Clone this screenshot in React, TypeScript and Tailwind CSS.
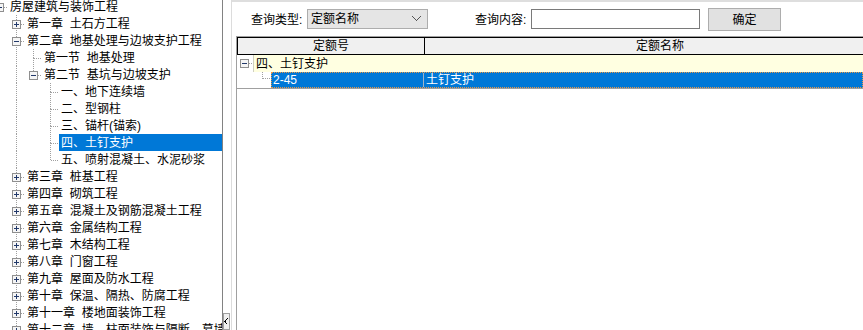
import React from "react";

type TreeNode = {
  label: string;
  children?: TreeNode[];
  closed?: boolean;
  selected?: boolean;
};

type Row = { node: TreeNode; depth: number; last: boolean; lines: boolean[] };

const chapter = (label: string): TreeNode => ({ label, closed: true });

const tree: TreeNode = {
  label: "房屋建筑与装饰工程",
  children: [
    chapter("第一章  土石方工程"),
    {
      label: "第二章  地基处理与边坡支护工程",
      children: [
        { label: "第一节  地基处理" },
        {
          label: "第二节  基坑与边坡支护",
          children: [
            { label: "一、地下连续墙" },
            { label: "二、型钢柱" },
            { label: "三、锚杆(锚索)" },
            { label: "四、土钉支护", selected: true },
            { label: "五、喷射混凝土、水泥砂浆" },
          ],
        },
      ],
    },
    chapter("第三章  桩基工程"),
    chapter("第四章  砌筑工程"),
    chapter("第五章  混凝土及钢筋混凝土工程"),
    chapter("第六章  金属结构工程"),
    chapter("第七章  木结构工程"),
    chapter("第八章  门窗工程"),
    chapter("第九章  屋面及防水工程"),
    chapter("第十章  保温、隔热、防腐工程"),
    chapter("第十一章  楼地面装饰工程"),
    chapter("第十二章  墙、柱面装饰与隔断、幕墙工程"),
    chapter("第十三章  天棚工程"),
  ],
};

const flatten = (node: TreeNode, depth: number, last: boolean, lines: boolean[], out: Row[]) => {
  out.push({ node, depth, last, lines });
  const kids = node.children ?? [];
  kids.forEach((c, i) => flatten(c, depth + 1, i === kids.length - 1, [...lines, !last], out));
  return out;
};

const rows = flatten(tree, 0, true, [], []);

const LINE = "#a0a0a0";

const Expander = ({ open }: { open: boolean }) => (
  <>
    <rect x="4.5" y="5.5" width="8" height="8" fill="#f5f5f5" stroke="#8f8f8f" />
    <line x1="6" x2="11" y1="9.5" y2="9.5" stroke="#22396a" />
    {!open ? <line x1="8.5" x2="8.5" y1="7" y2="12" stroke="#22396a" /> : null}
  </>
);

const Guide = ({ pass, node, top, bottom, box }: { pass?: boolean; node?: boolean; top?: boolean; bottom?: boolean; box?: "open" | "closed" }) => (
  <svg width="17" height="17" className="block shrink-0" shapeRendering="crispEdges">
    {pass ? <line x1="8.5" x2="8.5" y1="0" y2="17" stroke={LINE} strokeDasharray="1 1" /> : null}
    {node && top ? <line x1="8.5" x2="8.5" y1="0" y2="9" stroke={LINE} strokeDasharray="1 1" /> : null}
    {node && bottom ? <line x1="8.5" x2="8.5" y1="9" y2="17" stroke={LINE} strokeDasharray="1 1" /> : null}
    {node ? <line x1="9" x2="17" y1="9.5" y2="9.5" stroke={LINE} strokeDasharray="1 1" /> : null}
    {box ? <Expander open={box === "open"} /> : null}
  </svg>
);

const TreeRow = ({ row }: { row: Row }) => {
  const { node, depth, last, lines } = row;
  const hasKids = node.closed || (node.children && node.children.length > 0);
  return (
    <div className="flex h-[17px] items-stretch whitespace-pre">
      {lines.map((l, k) => (
        <Guide key={k} pass={l} />
      ))}
      <Guide node top={depth > 0} bottom={!last} box={hasKids ? (node.closed ? "closed" : "open") : undefined} />
      <span className={node.selected ? "flex-1 bg-[#0078d7] pl-[2px] pt-[1px] leading-[16px] text-white" : "pl-[2px] pr-[4px] pt-[1px] leading-[16px] text-black"}>{node.label}</span>
    </div>
  );
};

const ToolLabel = ({ text }: { text: string }) => <span className="w-[56px] shrink-0 pt-[10px] leading-[17px]">{text}</span>;

export default function App() {
  return (
    <div className="flex h-[330px] w-[863px] overflow-hidden bg-white font-['Liberation_Sans','Noto_Sans_CJK_SC',sans-serif] text-[12px] text-black">
      <div className="h-full w-[222px] shrink-0 overflow-hidden">
        <div className="ml-[-9px] mt-[-2px]">
          {rows.map((r, i) => (
            <TreeRow key={i} row={r} />
          ))}
        </div>
      </div>

      <div className="flex h-full w-[10px] shrink-0 flex-col justify-end border-l border-r border-l-[#828282] border-r-[#dcdcdc]">
        <div className="flex h-[17px] w-[7px] items-center justify-center border border-[#a0a0a0] bg-[#f0f0f0]">
          <svg width="5" height="7" shapeRendering="crispEdges">
            <polyline points="3.5,0.5 1,3.5 3.5,6.5" fill="none" stroke="#000" />
          </svg>
        </div>
      </div>

      <div className="flex min-w-0 flex-1 flex-col overflow-hidden border-t-2 border-[#dedede]">
        <div className="flex h-[34px] shrink-0 items-start pl-[19px]">
          <ToolLabel text="查询类型:" />
          <div className="mt-[7px] flex h-[20px] w-[121px] shrink-0 items-center justify-between border border-[#adadad] bg-[#e5e5e5] pl-[3px] pr-[6px]">
            <span className="pt-[1px] leading-[17px]">定额名称</span>
            <svg width="9" height="6" shapeRendering="crispEdges">
              <polyline points="0.5,0.5 4.5,4.5 8.5,0.5" fill="none" stroke="#555" />
            </svg>
          </div>
          <div className="ml-[47px] flex">
            <ToolLabel text="查询内容:" />
          </div>
          <div className="mt-[7px] h-[20px] w-[169px] shrink-0 border border-[#7a7a7a] bg-white" />
          <button className="ml-[8px] mt-[6px] h-[23px] w-[73px] shrink-0 border border-[#adadad] bg-[#e1e1e1] pt-[1px] leading-[17px]">确定</button>
        </div>

        <div className="ml-[4px] flex flex-1 flex-col border-l border-t border-[#a0a0a0]">
          <div className="flex h-[18px] shrink-0 border-b border-l border-t border-black bg-[#f0f0f0]">
            <div className="w-[187px] shrink-0 border-r border-black pt-[1px] text-center leading-[15px]">定额号</div>
            <div className="w-[470px] shrink-0 pt-[1px] text-center leading-[15px]">定额名称</div>
          </div>

          <div className="flex shrink-0 flex-col border-b border-[#a0a0a0]">
            <div className="flex h-[17px]">
              <svg width="16" height="17" className="block shrink-0" shapeRendering="crispEdges">
                <rect x="3.5" y="4.5" width="8" height="8" fill="#f5f5f5" stroke="#8f8f8f" />
                <line x1="5" x2="10" y1="8.5" y2="8.5" stroke="#22396a" />
                <line x1="12" x2="16" y1="8.5" y2="8.5" stroke={LINE} strokeDasharray="1 1" />
              </svg>
              <div className="flex-1 whitespace-nowrap border-l border-[#d0d0c0] bg-[#ffffe1] pl-[2px] pt-[1px] leading-[16px]">四、土钉支护</div>
            </div>
            <div className="flex h-[16px]">
              <svg width="34" height="16" className="block shrink-0" shapeRendering="crispEdges">
                <line x1="25.5" x2="25.5" y1="0" y2="7" stroke={LINE} strokeDasharray="1 1" />
                <line x1="26" x2="34" y1="6.5" y2="6.5" stroke={LINE} strokeDasharray="1 1" />
              </svg>
              <div className="flex flex-1 border border-dotted border-[#e89848] bg-[#0078d7] text-white">
                <div className="w-[152px] shrink-0 border-r border-[#9fb4c8] pl-[1px] leading-[14px]">2-45</div>
                <div className="flex-1 whitespace-nowrap pl-[2px] leading-[14px]">土钉支护</div>
              </div>
            </div>
          </div>
        </div>
      </div>
    </div>
  );
}
